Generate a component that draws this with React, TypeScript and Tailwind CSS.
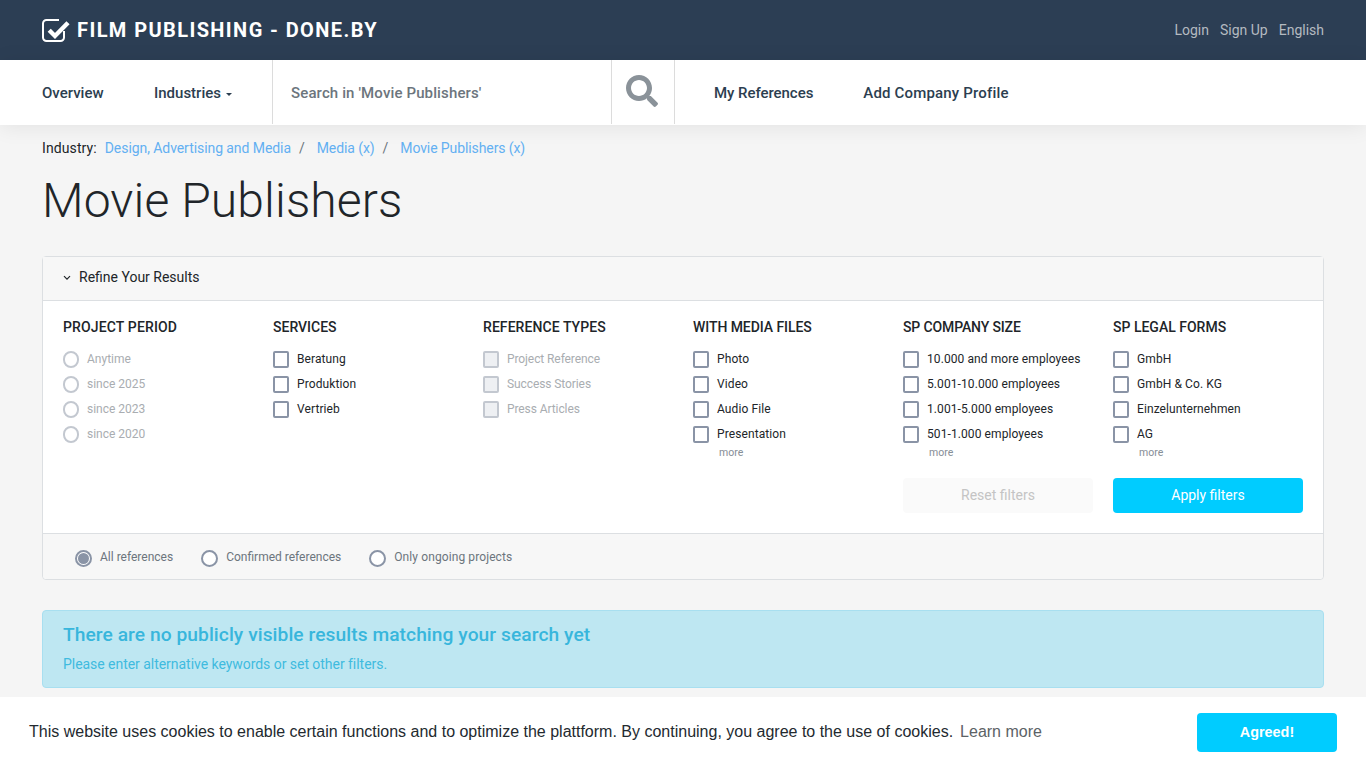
import React from "react";
import { FaSearch } from "react-icons/fa";

type Col = {
  title: string;
  titleTrack: string;
  track: string;
  kind: "radio" | "check";
  disabled?: boolean;
  items: string[];
  more?: boolean;
};

const cols: Col[] = [
  { title: "PROJECT PERIOD", titleTrack: "tracking-[0.14px]", track: "tracking-normal", kind: "radio", disabled: true, items: ["Anytime", "since 2025", "since 2023", "since 2020"] },
  { title: "SERVICES", titleTrack: "tracking-normal", track: "tracking-[0.1px]", kind: "check", items: ["Beratung", "Produktion", "Vertrieb"] },
  { title: "REFERENCE TYPES", titleTrack: "tracking-[0.07px]", track: "tracking-[-0.09px]", kind: "check", disabled: true, items: ["Project Reference", "Success Stories", "Press Articles"] },
  { title: "WITH MEDIA FILES", titleTrack: "tracking-[-0.07px]", track: "tracking-[0.1px]", kind: "check", items: ["Photo", "Video", "Audio File", "Presentation"], more: true },
  { title: "SP COMPANY SIZE", titleTrack: "tracking-[-0.13px]", track: "tracking-[0.09px]", kind: "check", items: ["10.000 and more employees", "5.001-10.000 employees", "1.001-5.000 employees", "501-1.000 employees"], more: true },
  { title: "SP LEGAL FORMS", titleTrack: "tracking-normal", track: "tracking-[0.09px]", kind: "check", items: ["GmbH", "GmbH & Co. KG", "Einzelunternehmen", "AG"], more: true },
];

function Row({ col, label }: { col: Col; label: string }) {
  const box =
    col.kind === "radio"
      ? "rounded-full border-[#c3c8d0] bg-white"
      : col.disabled
        ? "rounded-[2px] border-[#c3c8d0] bg-[#eef0f3]"
        : "rounded-[2px] border-[#8a94a6] bg-white";
  return (
    <div className="flex h-[25px] items-start first:h-[24px]">
      <span className={`h-[17px] w-4 shrink-0 border-2 ${box}`} />
      <span className={`ml-2 text-[12px] leading-[16px] ${col.track} ${col.disabled ? "text-[#a9adb1]" : "text-[#212529]"}`}>{label}</span>
    </div>
  );
}

function Bottom({ label, checked, track }: { label: string; checked?: boolean; track?: string }) {
  return (
    <div className="flex items-start">
      <span className="flex h-[17px] w-[17px] items-center justify-center rounded-full border-2 border-[#8a94a6] bg-white">
        {checked && <span className="h-[11px] w-[11px] rounded-full bg-[#8a94a6]" />}
      </span>
      <span className={`ml-2 text-[12px] leading-[14px] text-[#6c757d] ${track ?? ""}`}>{label}</span>
    </div>
  );
}

function Logo() {
  return (
    <svg width="28" height="24" viewBox="0 0 28 24" fill="none" className="shrink-0">
      <path d="M17 2H4.5A3.5 3.5 0 0 0 1 5.5V19.5A3.5 3.5 0 0 0 4.5 23H18.5A3.5 3.5 0 0 0 22 19.5V13" stroke="#fff" strokeWidth="2" />
      <path d="M7.2 12.2 L13 18 L26 4.8" stroke="#fff" strokeWidth="4.4" />
    </svg>
  );
}

export default function App() {
  return (
    <div className="min-h-[768px] bg-[#f5f5f5] font-['Roboto',sans-serif] text-[#212529]">
      <header className="flex h-[60px] items-center justify-between bg-[#2c3e54] px-[42px]">
        <div className="flex items-center">
          <Logo />
          <span className="ml-[7px] text-[20px] font-bold tracking-[1.4px] text-white">FILM PUBLISHING - DONE.BY</span>
        </div>
        <div className="flex gap-[11px] text-[14px] text-[#b4bac0]">
          <span>Login</span>
          <span>Sign Up</span>
          <span>English</span>
        </div>
      </header>

      <nav className="relative flex h-[65px] bg-white pl-[42px] text-[15px] font-medium text-[#2c3e50] shadow-[0_2px_20px_rgba(0,0,0,0.08)]">
        <div className="flex h-[64px] w-[112px] items-center pt-[2px]">Overview</div>
        <div className="flex h-[64px] w-[118px] items-center pt-[2px]">
          Industries
          <span className="ml-[5px] mt-[2px] h-0 w-0 border-x-[3.5px] border-t-[3.5px] border-x-transparent border-t-[#2c3e50]" />
        </div>
        <div className="flex h-[64px] w-[340px] items-center border-x border-[#dcdcdc] pl-[18px] pt-[2px] tracking-[0.13px] text-[#6c757d]">Search in 'Movie Publishers'</div>
        <div className="flex h-[64px] w-[63px] items-center justify-center border-r border-[#dcdcdc]">
          <FaSearch className="mb-[2px] mr-[2px] h-8 w-8 text-[#8a9299]" />
        </div>
        <div className="ml-[39px] flex h-[64px] items-center pt-[2px] tracking-[-0.05px]">My References</div>
        <div className="ml-[50px] flex h-[64px] items-center pt-[2px] tracking-[0.17px]">Add Company Profile</div>
      </nav>

      <main className="px-[42px]">
        <div className="flex h-[46px] items-center pt-[1px] text-[14px]">
          <span className="tracking-[0.1px]">Industry:</span>
          <span className="ml-2 tracking-[-0.07px] text-[#63b0f2]">Design, Advertising and Media</span>
          <span className="ml-2 text-[#6c757d]">/</span>
          <span className="ml-3 tracking-[-0.1px] text-[#63b0f2]">Media (x)</span>
          <span className="ml-2 text-[#6c757d]">/</span>
          <span className="ml-3 tracking-[-0.1px] text-[#63b0f2]">Movie Publishers (x)</span>
        </div>
        <h1 className="h-[85px] text-[48px] font-light leading-[59px] tracking-[0.12px]">Movie Publishers</h1>

        <section className="rounded-[4px] border border-[#dcdfe2] bg-white">
          <div className="flex h-[44px] items-center border-b border-[#dcdfe2] bg-[#f7f7f7] pb-[2px] pl-[20px] text-[14px] text-[#212529]">
            <svg width="8" height="6" viewBox="0 0 8 6" className="mr-[8px]" fill="none" stroke="#212529" strokeWidth="1.2">
              <path d="M1 1.2 4 4.2 7 1.2" />
            </svg>
            Refine Your Results
          </div>
          <div className="h-[232px] px-[20px] pt-[18px]">
            <div className="grid grid-cols-6 gap-x-[20px]">
              {cols.map((c) => (
                <div key={c.title} className="h-[159px]">
                  <div className={`mb-[15px] h-[17px] text-[14px] font-medium leading-[17px] text-[#212529] ${c.titleTrack}`}>{c.title}</div>
                  {c.items.map((i) => (
                    <Row key={i} col={c} label={i} />
                  ))}
                  {c.more && <div className="-mt-[5px] ml-[26px] text-[10.5px] leading-[14px] text-[#868e96]">more</div>}
                </div>
              ))}
            </div>
            <div className="grid grid-cols-6 gap-x-[20px]">
              <div className="col-start-5 flex h-[35px] items-center justify-center rounded-[4px] bg-[#fafafa] text-[14px] text-[#c4c4c4]">Reset filters</div>
              <div className="flex h-[35px] items-center justify-center rounded-[4px] bg-[#00ccff] text-[14px] text-white">Apply filters</div>
            </div>
          </div>
          <div className="flex h-[46px] items-center gap-[28px] rounded-b-[4px] border-t border-[#dcdfe2] bg-[#f7f7f7] pl-[32px] pt-[4px]">
            <Bottom label="All references" checked />
            <Bottom label="Confirmed references" />
            <Bottom label="Only ongoing projects" track="tracking-[0.1px]" />
          </div>
        </section>

        <section className="mt-[30px] h-[78px] rounded-[4px] border border-[#a8dff0] bg-[#bee7f2] px-[20px] pt-[12px] text-[#38b6dc]">
          <div className="text-[19.2px] font-medium leading-[24px] tracking-[0.065px]">There are no publicly visible results matching your search yet</div>
          <div className="mt-[7px] text-[14px] leading-[21px] tracking-[-0.04px] text-[#3fbbdf]">Please enter alternative keywords or set other filters.</div>
        </section>
      </main>

      <div className="fixed inset-x-0 bottom-0 flex h-[71px] items-center justify-between bg-white pl-[29px] pr-[29px] font-['Liberation_Sans',sans-serif] text-[16px] text-[#232a2f]">
        <div className="pb-[2px]">
          This website uses cookies to enable certain functions and to optimize the plattform. By continuing, you agree to the use of cookies.
          <span className="ml-[7px] text-[#5c6266]">Learn more</span>
        </div>
        <div className="flex h-[39px] w-[140px] items-center justify-center rounded-[4px] bg-[#00ccff] text-[14.4px] font-bold text-white">Agreed!</div>
      </div>
    </div>
  );
}
